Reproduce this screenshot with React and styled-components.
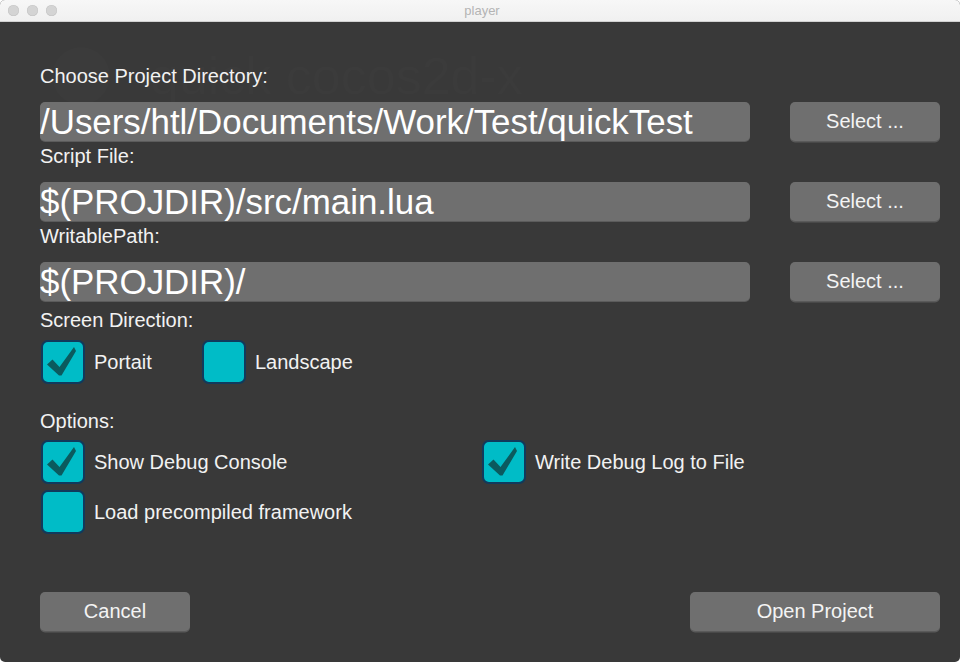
import React from 'react';
import styled, { createGlobalStyle } from 'styled-components';

const GlobalStyle = createGlobalStyle`
  html, body {
    margin: 0;
    padding: 0;
    background: #ffffff;
  }
  body {
    font-family: "Liberation Sans", Arial, Helvetica, sans-serif;
  }
`;

const Window = styled.div`
  width: 960px;
  height: 662px;
  border-radius: 5px;
  overflow: hidden;
  background: #393939;
  display: flex;
  flex-direction: column;
`;

const TitleBar = styled.div`
  height: 21px;
  flex: none;
  background: linear-gradient(#f7f7f7, #f0f0f0);
  border-bottom: 1px solid #d1d1d1;
  display: flex;
  align-items: center;
`;

const Lights = styled.div`
  display: flex;
  gap: 8px;
  padding-left: 8px;
`;

const Light = styled.span`
  width: 11px;
  height: 11px;
  border-radius: 50%;
  background: #d4d4d4;
  box-shadow: inset 0 0 0 0.5px #c4c4c4;
`;

const Title = styled.div`
  flex: 1;
  text-align: center;
  margin-right: 53px;
  font-size: 13px;
  color: #b4b4b4;
`;

const Body = styled.div`
  flex: 1;
  position: relative;
  padding: 42px 20px 0 40px;
  display: flex;
  flex-direction: column;
`;

/* faint remains of the launcher drawn behind the dialog */
const Backdrop = styled.div`
  position: absolute;
  left: 52px;
  top: 24px;
  display: flex;
  align-items: center;
  gap: 40px;
  color: rgba(255, 255, 255, 0.012);
  font-size: 52px;
  pointer-events: none;
`;

const GhostLogo = styled.div`
  width: 58px;
  height: 58px;
  border-radius: 50%;
  background: rgba(255, 255, 255, 0.012);
`;

const Field = styled.div`
  position: relative;
  margin-bottom: ${(p) => p.$gap}px;
`;

const Label = styled.div`
  height: 24px;
  line-height: 24px;
  font-size: 20px;
  color: #f2f2f2;
  margin-bottom: ${(p) => p.$below || 14}px;
`;

const InputRow = styled.div`
  display: flex;
  gap: 40px;
`;

const PathBox = styled.div`
  width: 710px;
  height: 39px;
  line-height: 39px;
  border-radius: 5px;
  background: #6f6f6f;
  box-shadow: 0 1px 0 #5c5c5c;
  color: #ffffff;
  font-size: 34.9px;
  white-space: nowrap;
  overflow: hidden;
`;

const Button = styled.button`
  width: ${(p) => p.$w}px;
  height: 39px;
  border: none;
  border-radius: 5px;
  background: #6f6f6f;
  box-shadow: 0 1.5px 0 #5a5a5a;
  color: #f4f4f4;
  font-family: "Liberation Sans", Arial, sans-serif;
  font-size: 20px;
  padding: 0;
  cursor: pointer;
`;

const CheckRow = styled.div`
  display: grid;
  grid-template-columns: ${(p) => p.$cols};
  row-gap: 6px;
  margin-bottom: ${(p) => p.$below || 0}px;
`;

const Check = styled.div`
  display: flex;
  align-items: center;
  gap: 9px;
  font-size: 20px;
  color: #f2f2f2;
`;

const Box = styled.div`
  width: 40px;
  height: 40px;
  margin-left: 1px;
  border: 2px solid #113a5c;
  border-radius: 7px;
  background: #00bcc7;
  display: flex;
  align-items: center;
  justify-content: center;
`;

const Footer = styled.div`
  margin-top: auto;
  margin-bottom: 31px;
  display: flex;
  justify-content: space-between;
`;

const Tick = () => (
  <svg width="40" height="40" viewBox="0 0 40 40">
    <path
      d="M4 22.5 L9.5 17.5 L16.5 25 L31 5 L33 9 L18.5 33.5 L16 33.5 Z"
      fill="#0b5a5e"
    />
  </svg>
);

const CheckBox = ({ checked, label }) => (
  <Check>
    <Box>{checked && <Tick />}</Box>
    {label}
  </Check>
);

const fields = [
  { label: 'Choose Project Directory:', value: '/Users/htl/Documents/Work/Test/quickTest', gap: 3 },
  { label: 'Script File:', value: '$(PROJDIR)/src/main.lua', gap: 3 },
  { label: 'WritablePath:', value: '$(PROJDIR)/', gap: 7 },
];

export default function App() {
  return (
    <>
      <GlobalStyle />
      <Window>
        <TitleBar>
          <Lights>
            <Light />
            <Light />
            <Light />
          </Lights>
          <Title>player</Title>
        </TitleBar>
        <Body>
          <Backdrop>
            <GhostLogo />
            <span>quick cocos2d-x</span>
          </Backdrop>
          {fields.map((f) => (
            <Field key={f.label} $gap={f.gap}>
              <Label>{f.label}</Label>
              <InputRow>
                <PathBox>{f.value}</PathBox>
                <Button $w={150}>Select ...</Button>
              </InputRow>
            </Field>
          ))}
          <Label $below={8}>Screen Direction:</Label>
          <CheckRow $cols="161px 200px" $below={25}>
            <CheckBox checked label="Portait" />
            <CheckBox label="Landscape" />
          </CheckRow>
          <Label $below={7}>Options:</Label>
          <CheckRow $cols="441px 400px">
            <CheckBox checked label="Show Debug Console" />
            <CheckBox checked label="Write Debug Log to File" />
            <CheckBox label="Load precompiled framework" />
          </CheckRow>
          <Footer>
            <Button $w={150}>Cancel</Button>
            <Button $w={250}>Open Project</Button>
          </Footer>
        </Body>
      </Window>
    </>
  );
}
